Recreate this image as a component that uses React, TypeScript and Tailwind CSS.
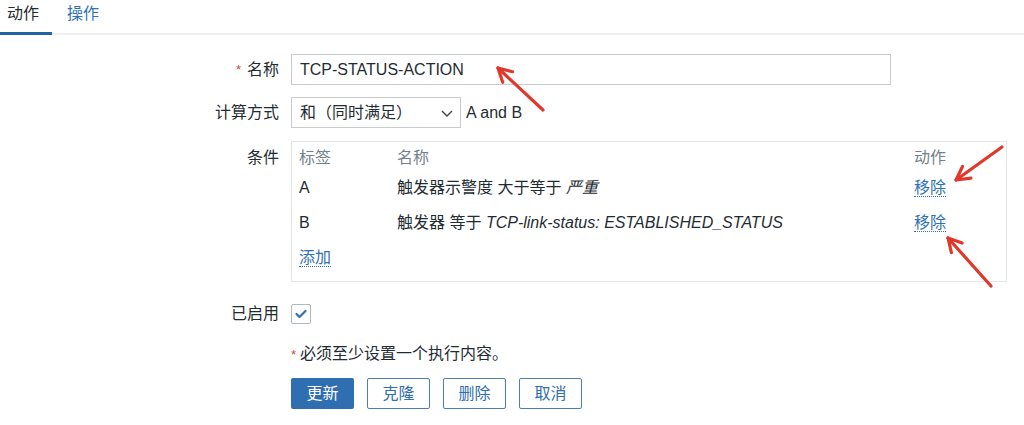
import React from 'react';

const font = { fontFamily: '"Liberation Sans", "Noto Sans CJK SC", sans-serif' };

const Arrow = ({ x1, y1, x2, y2 }: { x1: number; y1: number; x2: number; y2: number }) => {
  const a = Math.atan2(y2 - y1, x2 - x1);
  const len = 15;
  const spread = 0.5;
  const p1 = `${x2 - len * Math.cos(a - spread)},${y2 - len * Math.sin(a - spread)}`;
  const p2 = `${x2 - len * Math.cos(a + spread)},${y2 - len * Math.sin(a + spread)}`;
  return (
    <g stroke="#e0382b" strokeWidth={3.2} strokeLinecap="round" strokeLinejoin="round" fill="none">
      <line x1={x1} y1={y1} x2={x2} y2={y2} />
      <polyline points={`${p1} ${x2},${y2} ${p2}`} />
    </g>
  );
};

const App: React.FC = () => {
  return (
    <div className="relative w-[1024px] h-[425px] bg-white text-[16px] leading-[22px] text-[#1f2c33] overflow-hidden" style={font}>
      {/* tabs */}
      <div className="flex h-[35px] border-b-2 border-[#eef0f2]">
        <div className="w-[52px] pl-[7px] pt-[3px] border-b-[3px] border-[#1f65a6] -mb-[2px]">动作</div>
        <div className="pl-[15px] pt-[3px] text-[#2f72b3]">操作</div>
      </div>

      <div className="grid grid-cols-[279px_1fr] gap-x-3 mt-[19px]">
        {/* name */}
        <div className="flex items-center justify-end h-[31px]">
          <span className="text-[#d64541] mr-[6px] text-[13px]">*</span>名称
        </div>
        <div className="h-[31px] w-[600px] border border-[#c8ccce] flex items-center px-2">TCP-STATUS-ACTION</div>

        {/* calc */}
        <div className="flex items-center justify-end h-[31px] mt-3">计算方式</div>
        <div className="flex items-center mt-3">
          <div className="h-[31px] w-[170px] border border-[#c8ccce] flex items-center justify-between pl-2 pr-[6px]">
            <span>和（同时满足）</span>
            <svg width="14" height="14" viewBox="0 0 14 14" fill="none" stroke="#444" strokeWidth="1.4">
              <polyline points="2,5 7,10 12,5" />
            </svg>
          </div>
          <span className="ml-[5px]">A and B</span>
        </div>

        {/* conditions */}
        <div className="flex justify-end mt-[13px] pt-[6px]">条件</div>
        <div className="mt-[13px] w-[716px] h-[141px] border border-[#e3e6e8] px-[7px] pt-[6px]">
          <div className="grid grid-cols-[98px_1fr_85px] leading-[20px]">
            <div className="text-[#73828a]">标签</div>
            <div className="text-[#73828a]">名称</div>
            <div className="text-[#73828a]">动作</div>

            <div className="mt-[10px]">A</div>
            <div className="mt-[10px]">触发器示警度 大于等于 <i>严重</i></div>
            <div className="mt-[10px]"><span className="text-[#2f72b3] border-b border-dotted border-[#2f72b3]">移除</span></div>

            <div className="mt-[15px]">B</div>
            <div className="mt-[15px]">触发器 等于 <i>TCP-link-status: ESTABLISHED_STATUS</i></div>
            <div className="mt-[15px]"><span className="text-[#2f72b3] border-b border-dotted border-[#2f72b3]">移除</span></div>

            <div className="mt-[15px] col-span-3">
              <span className="text-[#2f72b3] border-b border-dotted border-[#2f72b3]">添加</span>
            </div>
          </div>
        </div>

        {/* enabled */}
        <div className="flex items-center justify-end mt-[22px] h-[20px]">已启用</div>
        <div className="mt-[22px]">
          <div className="w-[20px] h-[20px] border border-[#acbbc2] rounded-[2px] flex items-center justify-center">
            <svg width="14" height="14" viewBox="0 0 14 14" fill="none" stroke="#2f72b3" strokeWidth="2.2" strokeLinecap="round" strokeLinejoin="round">
              <polyline points="2.5,7 5.5,10 11.5,4" />
            </svg>
          </div>
        </div>

        {/* message */}
        <div />
        <div className="mt-[19px]">
          <span className="text-[#d64541] text-[13px] mr-[4px]">*</span>必须至少设置一个执行内容。
        </div>

        {/* buttons */}
        <div />
        <div className="flex gap-[13px] mt-[12px]">
          <button className="w-[63px] h-[31px] bg-[#2f6eb0] text-white rounded-[2px]">更新</button>
          <button className="w-[63px] h-[31px] border border-[#4a7fb5] text-[#2f6eb0] rounded-[2px]">克隆</button>
          <button className="w-[63px] h-[31px] border border-[#4a7fb5] text-[#2f6eb0] rounded-[2px]">删除</button>
          <button className="w-[63px] h-[31px] border border-[#4a7fb5] text-[#2f6eb0] rounded-[2px]">取消</button>
        </div>
      </div>

      {/* annotation arrows */}
      <svg className="absolute inset-0 pointer-events-none" width="1024" height="425">
        <Arrow x1={543} y1={110} x2={498} y2={68} />
        <Arrow x1={1002} y1={147} x2={956} y2={180} />
        <Arrow x1={991} y1={286} x2={948} y2={238} />
      </svg>
    </div>
  );
};

export default App;
